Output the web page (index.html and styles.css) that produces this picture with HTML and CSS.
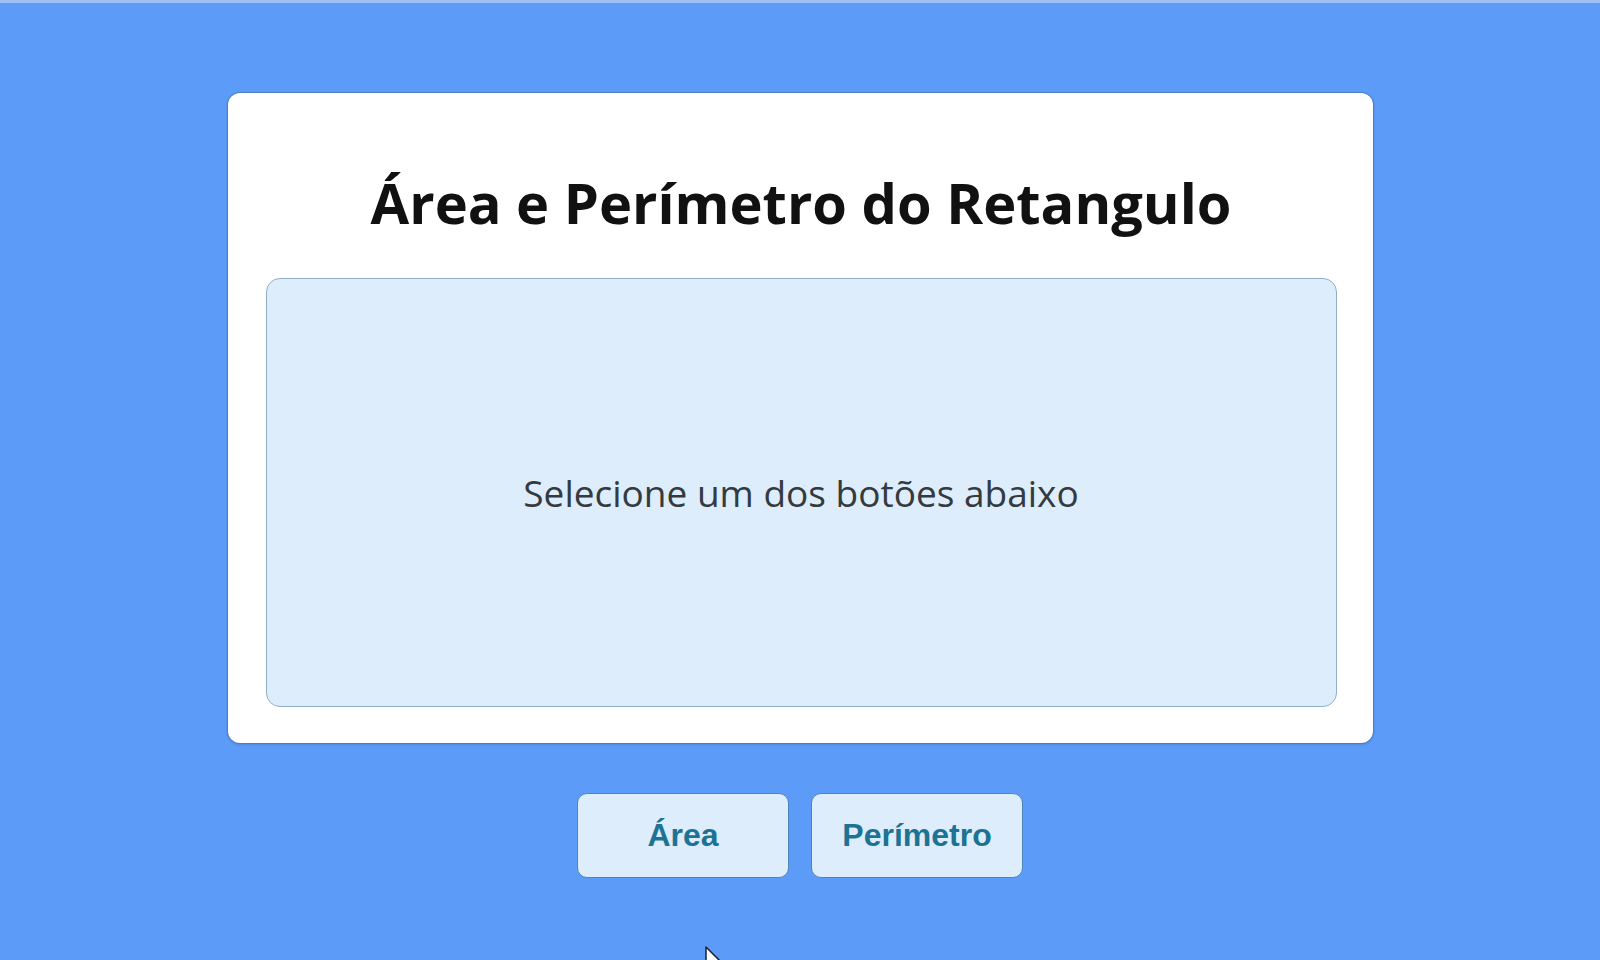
FILE: index.html
```html
<!DOCTYPE html>
<html lang="pt-BR">
<head>
<meta charset="utf-8">
<title>Área e Perímetro do Retangulo</title>
<link rel="stylesheet" href="styles.css">
</head>
<body>
<div class="topline"></div>
<main class="page">
  <section class="card">
    <h1 class="title">Área e Perímetro do Retangulo</h1>
    <div class="result">
      <p class="result-text">Selecione um dos botões abaixo</p>
    </div>
  </section>
  <div class="actions">
    <button class="btn">Área</button>
    <button class="btn">Perímetro</button>
  </div>
</main>
<svg class="cursor" width="20" height="28" viewBox="0 0 20 28"><path d="M1 1 L1 22 L6 17 L10 26 L13 25 L9 16 L16 16 Z" fill="#fff" stroke="#1a2230" stroke-width="1.5" stroke-linejoin="round"/></svg>
</body>
</html>
```
FILE: styles.css
```css
html, body {
  margin: 0;
  padding: 0;
}
body {
  background: #5c9bf8;
  width: 1600px;
  height: 960px;
  overflow: hidden;
  position: relative;
  font-family: "Open Sans", "Liberation Sans", sans-serif;
}
.topline {
  height: 3px;
  background: #9dbff3;
}
.page {
  display: flex;
  flex-direction: column;
  align-items: center;
  padding-top: 90px;
}
.card {
  box-sizing: border-box;
  width: 1145px;
  height: 650px;
  background: #fff;
  border-radius: 12px;
  box-shadow: 0 0 0 1px #4a7fc6, 0 1px 3px rgba(30, 60, 120, 0.4);
  padding: 78px 36px 36px 38px;
  display: flex;
  flex-direction: column;
}
.title {
  margin: 0;
  font-size: 56px;
  line-height: 62px;
  font-weight: 700;
  color: #111;
  text-align: center;
}
.result {
  margin-top: 45px;
  flex: 1;
  background: #ddedfc;
  border: 1px solid #8fafca;
  border-radius: 14px;
  display: flex;
  align-items: center;
  justify-content: center;
}
.result-text {
  margin: 0;
  font-size: 37px;
  color: #333a40;
}
.actions {
  display: flex;
  gap: 22px;
  margin-top: 50px;
}
.btn {
  box-sizing: border-box;
  width: 212px;
  height: 85px;
  background: #ddedfc;
  border: 1.5px solid #4e86b8;
  border-radius: 10px;
  font-family: "Liberation Sans", Arial, sans-serif;
  font-weight: 700;
  font-size: 32px;
  color: #1d7394;
  cursor: pointer;
}
.cursor {
  position: absolute;
  left: 705px;
  top: 946px;
}
```
